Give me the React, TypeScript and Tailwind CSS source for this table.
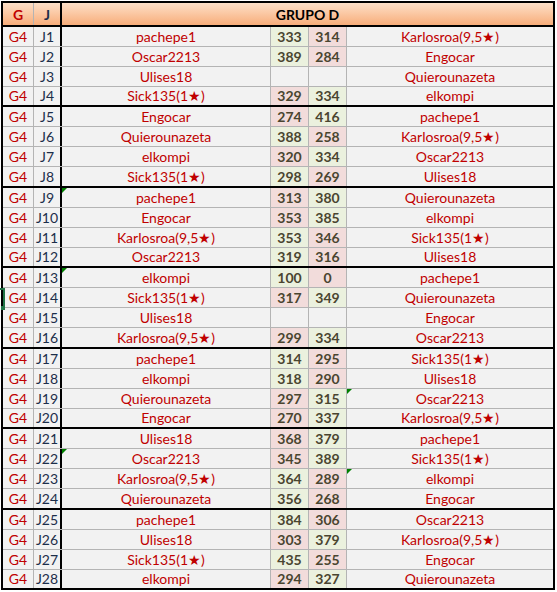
type Row = [string, string, number | null, number | null, string];

const rows: Row[] = [
  ["J1", "pachepe1", 333, 314, "Karlosroa(9,5★)"],
  ["J2", "Oscar2213", 389, 284, "Engocar"],
  ["J3", "Ulises18", null, null, "Quierounazeta"],
  ["J4", "Sick135(1★)", 329, 334, "elkompi"],
  ["J5", "Engocar", 274, 416, "pachepe1"],
  ["J6", "Quierounazeta", 388, 258, "Karlosroa(9,5★)"],
  ["J7", "elkompi", 320, 334, "Oscar2213"],
  ["J8", "Sick135(1★)", 298, 269, "Ulises18"],
  ["J9", "pachepe1", 313, 380, "Quierounazeta"],
  ["J10", "Engocar", 353, 385, "elkompi"],
  ["J11", "Karlosroa(9,5★)", 353, 346, "Sick135(1★)"],
  ["J12", "Oscar2213", 319, 316, "Ulises18"],
  ["J13", "elkompi", 100, 0, "pachepe1"],
  ["J14", "Sick135(1★)", 317, 349, "Quierounazeta"],
  ["J15", "Ulises18", null, null, "Engocar"],
  ["J16", "Karlosroa(9,5★)", 299, 334, "Oscar2213"],
  ["J17", "pachepe1", 314, 295, "Sick135(1★)"],
  ["J18", "elkompi", 318, 290, "Ulises18"],
  ["J19", "Quierounazeta", 297, 315, "Oscar2213"],
  ["J20", "Engocar", 270, 337, "Karlosroa(9,5★)"],
  ["J21", "Ulises18", 368, 379, "pachepe1"],
  ["J22", "Oscar2213", 345, 389, "Sick135(1★)"],
  ["J23", "Karlosroa(9,5★)", 364, 289, "elkompi"],
  ["J24", "Quierounazeta", 356, 268, "Engocar"],
  ["J25", "pachepe1", 384, 306, "Oscar2213"],
  ["J26", "Ulises18", 303, 379, "Karlosroa(9,5★)"],
  ["J27", "Sick135(1★)", 435, 255, "Engocar"],
  ["J28", "elkompi", 294, 327, "Quierounazeta"],
];

// green error markers (top-left of cell)
const flagLeft = ["J9", "J13", "J22"];
const flagRight = ["J19", "J23"];

const Flag = () => (
  <span className="absolute left-0 top-0 w-0 h-0 border-t-[5px] border-t-[#008000] border-r-[5px] border-r-transparent" />
);

const scoreBg = (a: number | null, b: number | null) => {
  if (a === null || b === null) return "bg-[#f2f2f2]";
  return a > b ? "bg-[#ebf1de]" : "bg-[#f2dcdb]";
};

const GameRow = ({ r, last, tall }: { r: Row; last: boolean; tall: boolean }) => {
  const [j, left, s1, s2, right] = r;
  const h = last ? (tall ? "h-[19px]" : "h-[18px]") : "h-[20px] border-b border-[#b4b4b4]";
  return (
    <div className={`flex ${h} text-[14px] leading-none`}>
      <div className="w-[31px] border-r border-[#b4b4b4] flex items-center justify-center text-[#c00000]">G4</div>
      <div className="w-[28px] border-r-2 border-black flex items-center justify-center text-[#1c2e4a]">{j}</div>
      <div className="relative w-[209px] border-r border-[#b4b4b4] flex items-center justify-center text-[#c00000]">
        {flagLeft.includes(j) && <Flag />}
        {left}
      </div>
      <div className={`w-[38px] border-r border-[#b4b4b4] flex items-center justify-center font-bold text-[#4a4530] ${scoreBg(s1, s2)}`}>
        {s1}
      </div>
      <div className={`w-[38px] border-r border-[#b4b4b4] flex items-center justify-center font-bold text-[#4a4530] ${scoreBg(s2, s1)}`}>
        {s2}
      </div>
      <div className="relative w-[206px] flex items-center justify-center text-[#c00000]">
        {flagRight.includes(j) && <Flag />}
        {right}
      </div>
    </div>
  );
};

export default function App() {
  const groups: Row[][] = [];
  for (let i = 0; i < rows.length; i += 4) groups.push(rows.slice(i, i + 4));

  return (
    <div className="relative w-[557px] h-[592px] bg-white font-['Lato',sans-serif]">
      <div className="absolute left-0 top-[288px] w-[4px] h-[2px] bg-[#217346]" />
      <div className="absolute left-[3px] top-[288px] w-[2px] h-[19px] bg-[#217346]" />
      <div className="absolute left-[1px] top-[306px] w-[4px] h-[4px] bg-[#217346]" />

      <div className="ml-px pt-px w-[556px]">
        <div className="w-[554px] border-2 border-black bg-[#f2f2f2]">
          <div className="flex h-[24px] border-b-2 border-black bg-gradient-to-b from-[#fde0c8] to-[#f7ad7a] text-[14px]">
            <div className="w-[31px] border-r border-[#b4b4b4] flex items-center justify-center text-[#c00000] font-bold">G</div>
            <div className="w-[28px] border-r-2 border-black flex items-center justify-center text-[#1c2e4a] font-bold">J</div>
            <div className="flex-1 flex items-center justify-center font-bold text-black">GRUPO D</div>
          </div>
          {groups.map((g, gi) => (
            <div key={gi} className={gi < groups.length - 1 ? "border-b-2 border-black" : ""}>
              {g.map((r, ri) => (
                <GameRow key={r[0]} r={r} last={ri === g.length - 1} tall={gi % 2 === 1} />
              ))}
            </div>
          ))}
        </div>
      </div>
    </div>
  );
}
